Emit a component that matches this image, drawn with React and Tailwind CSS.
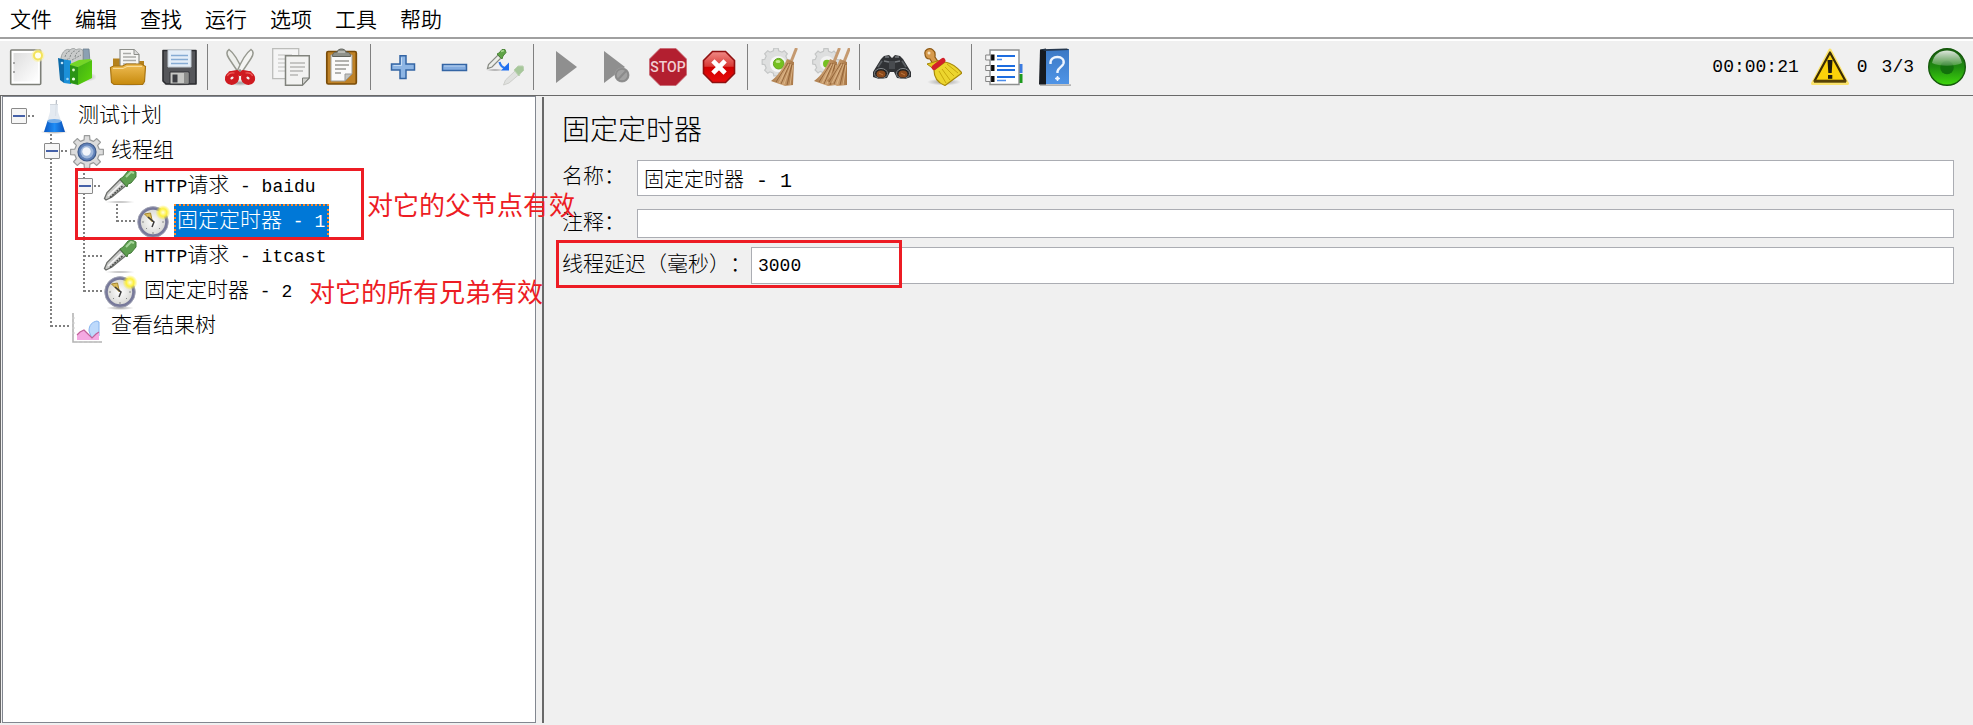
import React, { useState } from 'react';

const gearPath = (cx, cy, ro, ri, teeth) => {
  const pts = [];
  const step = (Math.PI * 2) / teeth;
  for (let i = 0; i < teeth; i++) {
    const a = i * step - Math.PI / 2;
    [[-0.3, ri], [-0.2, ro], [0.2, ro], [0.3, ri]].forEach(([k, r]) => {
      pts.push((cx + Math.cos(a + k * step) * r).toFixed(2) + ' ' + (cy + Math.sin(a + k * step) * r).toFixed(2));
    });
  }
  return 'M' + pts.join('L') + 'Z';
};

const Defs = () => (
  <svg width="0" height="0" className="absolute" aria-hidden="true">
    <defs>
      <linearGradient id="gold" x1="0" y1="0" x2="0" y2="1"><stop offset="0" stopColor="#efbd55" /><stop offset="1" stopColor="#c78a0c" /></linearGradient>
      <linearGradient id="green" x1="0" y1="0" x2="1" y2="1"><stop offset="0" stopColor="#3fae14" /><stop offset="1" stopColor="#5fd60a" /></linearGradient>
      <linearGradient id="paper" x1="0" y1="0" x2="1" y2="1"><stop offset="0" stopColor="#dedede" /><stop offset="1" stopColor="#ffffff" /></linearGradient>
      <linearGradient id="red" x1="0" y1="0" x2="0" y2="1"><stop offset="0" stopColor="#f08a86" /><stop offset="0.48" stopColor="#d93a35" /><stop offset="0.5" stopColor="#d00000" /><stop offset="1" stopColor="#e80c0c" /></linearGradient>
      <linearGradient id="book" x1="0" y1="0" x2="0" y2="1"><stop offset="0" stopColor="#3b78c4" /><stop offset="1" stopColor="#4f94e6" /></linearGradient>
      <linearGradient id="straw" x1="0" y1="0" x2="1" y2="0"><stop offset="0" stopColor="#ab7b4b" /><stop offset="0.5" stopColor="#cda273" /><stop offset="1" stopColor="#a87645" /></linearGradient>
      <linearGradient id="ball" x1="0" y1="0" x2="0" y2="1"><stop offset="0" stopColor="#1a5a12" /><stop offset="0.5" stopColor="#1f8c10" /><stop offset="1" stopColor="#3fd80c" /></linearGradient>
      <linearGradient id="shine" x1="0" y1="0" x2="0" y2="1"><stop offset="0" stopColor="#ffffff" stopOpacity="0.85" /><stop offset="1" stopColor="#ffffff" stopOpacity="0.2" /></linearGradient>
      <linearGradient id="liquid" x1="0" y1="0" x2="1" y2="0"><stop offset="0" stopColor="#0a56c0" /><stop offset="0.5" stopColor="#1e8cf5" /><stop offset="1" stopColor="#0a50b8" /></linearGradient>
      <radialGradient id="clock"><stop offset="0" stopColor="#ffffff" /><stop offset="1" stopColor="#d6d6d2" /></radialGradient>
      <radialGradient id="spark"><stop offset="0" stopColor="#fffde0" /><stop offset="0.5" stopColor="#fdf03c" /><stop offset="1" stopColor="#fdf03c" stopOpacity="0" /></radialGradient>
      <radialGradient id="shadow"><stop offset="0" stopColor="#000000" stopOpacity="0.35" /><stop offset="1" stopColor="#000000" stopOpacity="0" /></radialGradient>
    </defs>
  </svg>
);

const Icon = ({ children, size = 38 }) => (
  <svg width={size} height={size} viewBox={`0 0 ${size} ${size}`} className="shrink-0" fill="none" aria-hidden="true">{children}</svg>
);

const NewIcon = () => (
  <Icon>
    <rect x="3.7" y="2" width="30" height="34.5" rx="1" fill="#fff" stroke="#7d7f78" strokeWidth="1.6" />
    <rect x="6.5" y="5" width="24.5" height="28.5" fill="url(#paper)" />
    <path d="M6 14h2v2H6zM6 23h2v2H6z" fill="#a8a8a8" />
    <circle cx="31" cy="7.500" r="6.500" fill="#fbf2a0" opacity="0.6" />
    <circle cx="31" cy="7.500" r="4" fill="#fffef0" stroke="#f4e45a" strokeWidth="2" />
  </Icon>
);
const TemplatesIcon = () => (
  <Icon>
    <ellipse cx="26" cy="29" rx="13" ry="5" fill="url(#shadow)" />
    <path d="M25 1h6l1 14-7 4z" fill="#8ba0b2" stroke="#6d7f8e" strokeWidth="0.8" />
    <path d="M3 10C4 3 9 0 12 2c2-2 5-2 6 0 3-2 6-1 7 1v14l-13 6-9-8z" fill="#c9cbcb" stroke="#8f9494" strokeWidth="0.8" />
    <path d="M7 9c1-4 3-6 5-6M12 9c1-4 3-6 5-6M17 9c1-4 3-6 5-6M6 13l6-3M14 12l9-5" stroke="#888d8d" strokeWidth="1" strokeDasharray="2 1" />
    <path d="M0 10l6 1.500V35l-4-3z" fill="#0d6aa8" />
    <path d="M6 11.500l7 1V36L6 35z" fill="#1b90d8" />
    <path d="M12 16l9-4 11-1 2 1-13 7-9-1z" fill="#74d626" />
    <path d="M12 17l8 2v18l-8-2z" fill="#2a9414" />
    <path d="M20 19l14-7v18l-14 7z" fill="url(#green)" />
    <circle cx="4" cy="15" r="1.300" fill="#bfe4fa" /><circle cx="9.500" cy="31" r="1.300" fill="#9fd4f4" />
    <circle cx="15.500" cy="22" r="1.400" fill="#d9f7c4" /><circle cx="15.500" cy="31" r="1.600" fill="#e9ffe0" />
  </Icon>
);
const OpenIcon = () => (
  <Icon>
    <ellipse cx="20" cy="36" rx="19" ry="2" fill="url(#shadow)" />
    <path d="M4 20V10.500h9L15 13h20v9z" fill="#b4811c" />
    <path d="M11 21V1.500h14l5 5V21z" fill="#f6f6f4" stroke="#8d8f8a" strokeWidth="1.200" />
    <path d="M25 1.500v5h5" fill="#ddd" stroke="#8d8f8a" />
    <path d="M14 5.500h8M14 9h13M14 12.500h13M14 16h13" stroke="#a9aaa7" strokeWidth="1.500" />
    <path d="M1.500 19.500l3-1.500h9l4 -2h15l4 2.500-1 15-2 3H5l-2.500-2z" fill="url(#gold)" stroke="#a87410" strokeWidth="1.200" />
    <path d="M4 20.500h10l4-2h15" stroke="#f8dc98" strokeWidth="1" />
  </Icon>
);
const SaveIcon = () => (
  <Icon>
    <ellipse cx="19" cy="36.500" rx="18" ry="1.500" fill="url(#shadow)" />
    <path d="M3 2.500h33V36H6l-3-3z" fill="#55565a" stroke="#2b2c30" strokeWidth="1.600" strokeLinejoin="round" />
    <path d="M8 2h23v17H8z" fill="#e4eef8" stroke="#c3cbd3" />
    <path d="M11 7.500h17M11 11.500h17M11 15.500h17" stroke="#86acd4" strokeWidth="1.500" />
    <path d="M10 24h19v12H10z" fill="#c6c7c4" stroke="#303034" strokeWidth="1" />
    <path d="M12.500 26.500h5v8h-5z" fill="#3c3d42" />
    <path d="M24 25h4v10h-4z" fill="#8d8e8c" />
  </Icon>
);
const CutIcon = () => (
  <Icon>
    <ellipse cx="19" cy="35" rx="13" ry="3" fill="url(#shadow)" />
    <path d="M8 1.500c-3 2-2 6 0 9l10 15 4-2C18 14 13 5 8 1.500z" fill="#eeefec" stroke="#96988f" strokeWidth="1.500" />
    <path d="M30 1.500c3 2 2 6 0 9L20 25.500l-4-2C20 14 25 5 30 1.500z" fill="#f4f4f2" stroke="#96988f" strokeWidth="1.500" />
    <ellipse cx="11" cy="30" rx="4.500" ry="4" stroke="#cf1a20" strokeWidth="5.500" transform="rotate(-35 11 30)" />
    <ellipse cx="27" cy="30" rx="4.500" ry="4" stroke="#cf1a20" strokeWidth="5.500" transform="rotate(35 27 30)" />
    <path d="M8 25.500l8-1.500 3 2 3-2 8 1.500" stroke="#cf1a20" strokeWidth="4" strokeLinejoin="round" />
    <path d="M6.500 28c1-3 4-3.500 7-3M31.500 28c-1-3-4-3.500-7-3" stroke="#f0605c" strokeWidth="1.200" />
    <circle cx="19" cy="22.500" r="1.200" fill="#8a8a86" />
  </Icon>
);
const CopyIcon = () => (
  <Icon>
    <path d="M.7.700h26v30H.7z" fill="#f5f5f5" stroke="#bcbdba" strokeWidth="1.300" />
    <path d="M6 7h14M6 11h10M6 15h7M6 19h7M6 23h7" stroke="#d1d1cf" strokeWidth="1.400" />
    <path d="M13.500 7.700H37.300V30l-7 7.300H13.500z" fill="#f2f2f1" stroke="#81837d" strokeWidth="1.500" />
    <path d="M18 15h15M18 19h15M18 23h13M18 27h8" stroke="#b6b7b4" strokeWidth="1.400" />
    <path d="M37 30h-6.500v7z" fill="#cfd0cd" stroke="#7b7d77" />
  </Icon>
);
const PasteIcon = () => (
  <Icon>
    <rect x="3.800" y="3.500" width="29.500" height="32.500" rx="1.500" fill="#bf8227" stroke="#7a4c08" strokeWidth="1.700" />
    <path d="M8 7h21v19l-7 7H8z" fill="#fafafa" stroke="#a1a29e" />
    <path d="M29 26h-7v7z" fill="#c4c5c1" stroke="#999" />
    <path d="M12 13h14M12 17h14M12 21h11M12 25h6" stroke="#9a9b97" strokeWidth="1.500" />
    <path d="M9.500 8.500c0-4 2-4 4.500-4.500 1-4 8-4 9 0 3 .5 4.500 1 4.500 4.500z" fill="#8f918a" stroke="#60625c" />
    <path d="M15 4h7" stroke="#c3c4be" strokeWidth="1.500" />
  </Icon>
);
const PlusIcon = () => (
  <Icon><path d="M16 7.700h6V16h8.500v6H22v8.500h-6V22H7.500v-6H16z" fill="#8db5e4" stroke="#3465a4" strokeWidth="1.500" /><path d="M17.500 9.500v8h-8" stroke="#c5dbf3" /></Icon>
);
const MinusIcon = () => (
  <Icon><path d="M7.500 16.500h24v6h-24z" fill="#83ace0" stroke="#3465a4" strokeWidth="1.500" /><path d="M9 18h21" stroke="#b9d2ef" /></Icon>
);
const ToggleIcon = () => (
  <Icon>
    <ellipse cx="9" cy="22" rx="9" ry="1.500" fill="url(#shadow)" />
    <path d="M1.500 20.500l1-4L12 7l3 3L6 19z" fill="#eceee9" stroke="#878a83" strokeWidth="1.200" />
    <path d="M11 6l2-1 3-3.500 3 0 1 3-3 3.500-1 3z" fill="#5fa346" stroke="#4c8538" />
    <path d="M15 3.500l3-1" stroke="#a8d890" strokeWidth="1.500" />
    <path d="M13.500 14c1 4 3 6 7 6.500" stroke="#2a78f0" strokeWidth="2.200" />
    <path d="M23 14.500v8h-8z" fill="#1f6ef0" />
    <g opacity="0.55">
      <path d="M17.500 37l2-5L29 23l4 3.500L23 35z" fill="#d4d6d2" stroke="#b2b4ae" />
      <path d="M28 22l4-4 5 0 1 4-4 4-1 2z" fill="#6da657" stroke="#8fb77e" />
    </g>
  </Icon>
);
const PlayIcon = () => (<Icon><path d="M9 3l21 16L9 35z" fill="#8f8f8f" /></Icon>);
const PlayNoPauseIcon = () => (
  <Icon>
    <path d="M6 3l21 16L6 35z" fill="#8f8f8f" />
    <circle cx="24" cy="27" r="7.500" fill="#a2a2a2" /><circle cx="24" cy="27" r="6.200" stroke="#8b8b8b" strokeWidth="1.800" />
    <path d="M20 31.500l8.500-9" stroke="#8b8b8b" strokeWidth="2" />
  </Icon>
);
const StopIcon = () => (
  <Icon>
    <path d="M11 .500h16L37.500 11v16L27 37.500H11L.5 27V11z" fill="#b31f30" stroke="#c86a74" strokeWidth="0.800" />
    <text x="19" y="24" textAnchor="middle" fontFamily="Liberation Sans Narrow, Roboto, sans-serif" fontWeight="500" fontSize="14" fill="#f1cdd1">STOP</text>
  </Icon>
);
const ShutdownIcon = () => (
  <Icon>
    <path d="M12.500 3.500h13L34.500 12.500v13L25.500 34.500h-13L3.500 25.500v-13z" fill="url(#red)" stroke="#8f1010" strokeWidth="1.600" />
    <path d="M14.500 14.500l9 9M23.500 14.500l-9 9" stroke="#fff" strokeWidth="4.600" strokeLinecap="square" />
  </Icon>
);
const Straw = ({ dx = 0, narrow = false }) => (
  <g transform={`translate(${dx} 0)`}>
    <path d="M35.500 0L30 14" stroke="#c59a70" strokeWidth="3" />
    <path d={narrow ? 'M26 11l7 3 0 23-10 1-10-5C17 28 22 20 26 11z' : 'M26 11l7 3-1 23-8 1-14-5C17 28 22 20 26 11z'} fill="url(#straw)" />
    <path d="M27 15l-12 19M29 15l-9 21M31 16l-5 21" stroke="#8a5a30" strokeWidth="0.800" />
    <path d="M28 16l-10 19M30 16l-7 20M32 17l-3 20" stroke="#e2bd8e" strokeWidth="0.800" />
  </g>
);
const ClearIcon = () => (
  <Icon>
    <path d={gearPath(15, 14, 14, 11.5, 8)} fill="#dedfdf" stroke="#c4c6c6" strokeWidth="1.200" />
    <circle cx="17" cy="16" r="8" fill="#f6f6f6" />
    <circle cx="17.700" cy="15.700" r="5.300" fill="#76c021" stroke="#64a820" />
    <ellipse cx="17" cy="13.500" rx="2.500" ry="1.500" fill="#c3e98d" />
    <Straw />
  </Icon>
);
const ClearAllIcon = () => (
  <Icon>
    <path d={gearPath(14, 14, 13.5, 11, 8)} fill="#dedfdf" stroke="#c4c6c6" strokeWidth="1.200" />
    <circle cx="15" cy="15" r="7" fill="#f2f2f2" />
    <circle cx="15" cy="15.700" r="4" fill="#76c021" />
    <Straw dx={-8} /><Straw dx={2} narrow />
  </Icon>
);
const SearchIcon = () => (
  <Icon>
    <path d="M0 24L8 11l3-3 5-1 3 3 3-3 5 1 3 3 8 13v5l-6 2-8-1-3-6h-4l-3 6-8 1-6-2z" fill="#303235" />
    <path d="M12 9h4M22 9h4M11 13l5 1M22 14l5-1" stroke="#777b7f" strokeWidth="1.600" />
    <path d="M5 19l4-6M33 19l-4-6" stroke="#5c6064" strokeWidth="1.600" />
    <rect x="16" y="13" width="6" height="8" fill="#484b4f" />
    <ellipse cx="8" cy="25.500" rx="6.500" ry="5" fill="#222" stroke="#85898c" /><ellipse cx="8" cy="26" rx="4.500" ry="3.500" fill="#8c4a1c" />
    <ellipse cx="30" cy="25.500" rx="6.500" ry="5" fill="#222" stroke="#85898c" /><ellipse cx="30" cy="26" rx="4.500" ry="3.500" fill="#8c4a1c" />
    <path d="M6 25l4 2M28 25l4 2" stroke="#c17b40" />
  </Icon>
);
const ResetSearchIcon = () => (
  <Icon>
    <ellipse cx="20" cy="34" rx="17" ry="3.500" fill="url(#shadow)" />
    <path d="M1 6C0 2 5-1 9 2c3 2 2 5 2 7l4 6-5 3-4-7C3 11 1 9 1 6z" fill="#d69a4c" stroke="#8f5a14" strokeWidth="1.200" />
    <circle cx="5" cy="5" r="1.500" fill="#f6e2c0" />
    <path d="M3 16l14-4 4 2-10 8z" fill="#e6c91e" stroke="#a88a08" />
    <path d="M10 22l11-8c6 1 12 5 17 11L21 37.500C14 35 10 29 10 22z" fill="#ecd52e" stroke="#a8890a" strokeWidth="1.200" />
    <path d="M15 23l7 12M18 21l8 11M21 19l9 9M23 16l11 9" stroke="#c9a90e" strokeWidth="1" />
    <path d="M10 19.500l9-7" stroke="#d3202a" strokeWidth="5" strokeLinecap="round" />
  </Icon>
);
const FunctionIcon = () => (
  <Icon>
    <rect x="32" y="16" width="5.500" height="9" fill="#3b7be0" /><rect x="32" y="26" width="5.500" height="9" fill="#1d9a1d" />
    <path d="M5 2h29v34.500H5z" fill="#fff" stroke="#8e9090" strokeWidth="1.400" />
    <path d="M6 6.500h3.500v6H6zM6 17h3.500v6H6zM6 28h3.500v6H6z" fill="#0b0b0b" />
    <path d="M0.700 7h5v5h-5zM0.700 17.500h5v5h-5zM0.700 28.500h5v5h-5z" fill="#f3f3f3" stroke="#858585" />
    <path d="M12 8h18M12 18h18M12 22h18M12 29h18" stroke="#1e6de0" strokeWidth="1.800" />
    <path d="M12 11.500h5M12 32.500h9" stroke="#4a8cec" strokeWidth="1.600" />
  </Icon>
);
const HelpIcon = () => (
  <Icon>
    <path d="M4 36.500h31v1.200H4z" fill="#999" />
    <path d="M4 1.500L10 .500v36H3z" fill="#161a20" />
    <path d="M10 2l23-1v35H10z" fill="url(#book)" />
    <path d="M5 1.300L31 .500l2 1.500-24 1z" fill="#26384e" />
    <path d="M14.500 16c-.5-5 3-7 7-7s7 2.500 6 6.500c-1 3.500-5.500 4-6 8v1.500" stroke="#eef5ff" strokeWidth="2.400" />
    <path d="M21.500 28l.8 1.700 1.700.8-1.700.8-.8 1.700-.8-1.700-1.700-.8 1.700-.8z" fill="#eef5ff" stroke="#eef5ff" />
  </Icon>
);
const WarningIcon = () => (
  <Icon>
    <path d="M19 2L36.500 35.500h-35z" fill="#fbd20a" stroke="#fbe36c" strokeWidth="3" strokeLinejoin="round" />
    <path d="M19 4.500L34.500 33h-31z" fill="#fbd20a" stroke="#3a2c05" strokeWidth="2.200" strokeLinejoin="round" />
    <path d="M3 33.200h32" stroke="#574206" strokeWidth="3" />
    <path d="M16.500 12h5l-.8 13h-3.400z" fill="#1d1a10" /><rect x="17" y="27" width="4.300" height="3.800" fill="#1d1a10" />
  </Icon>
);
const RunningIcon = () => (
  <Icon>
    <circle cx="19" cy="19" r="18.300" fill="url(#ball)" stroke="#155a0c" strokeWidth="1.400" />
    <circle cx="19" cy="19.500" r="6.800" fill="#12700c" />
    <path d="M4 15C6 6 12 2.500 19 2.500S32 6 34 15c-7 3.500-23 3.500-30 0z" fill="url(#shine)" />
  </Icon>
);

/* tree icons */
const FlaskIcon = () => (
  <Icon size={36}>
    <ellipse cx="18" cy="33" rx="14" ry="2" fill="url(#shadow)" />
    <path d="M20.500 1l-1 16" stroke="#b8bec6" strokeWidth="1.300" />
    <path d="M14 5h8v8l7 20H8l6-20z" fill="#dfe6ee" fillOpacity="0.85" />
    <path d="M11.500 22h14L29 33H8z" fill="url(#liquid)" />
    <ellipse cx="18.300" cy="22" rx="7" ry="2" fill="#77aee8" />
    <path d="M14 5.500h8" stroke="#cfd5dc" />
  </Icon>
);
const GearIcon = () => (
  <Icon size={36}>
    <path d={gearPath(18, 18, 16.6, 12.5, 8)} fill="#dcdcdc" stroke="#9a9c9c" strokeWidth="1.200" strokeLinejoin="round" />
    <circle cx="18" cy="18" r="9" fill="#5f80b8" stroke="#3c5888" strokeWidth="1.200" />
    <circle cx="18" cy="18" r="6.500" fill="#9fb7da" />
    <circle cx="17.500" cy="17.500" r="4.200" fill="#f3f6fb" />
  </Icon>
);
const DropperIcon = () => (
  <Icon size={36}>
    <ellipse cx="18" cy="33" rx="16" ry="1.200" fill="url(#shadow)" />
    <path d="M2.500 29.500L5 23.500 18 10.500l6 6L10 28l-6 3z" fill="#c9cac8" stroke="#6b6d6a" strokeWidth="1.300" />
    <path d="M6 27l14-13" stroke="#f5f5f5" strokeWidth="1.600" />
    <path d="M8 28.500l13-12" stroke="#4a4c4a" strokeWidth="1.500" strokeDasharray="2 1" />
    <path d="M18 10l3-2 5-6 4-1 4 2 0 5-5 6-3 1-1 3z" fill="#5f9f51" stroke="#457c3a" />
    <path d="M24 8l5-5 3 1" stroke="#a8d69c" strokeWidth="2" />
  </Icon>
);
const ClockIcon = () => (
  <Icon size={36}>
    <ellipse cx="18" cy="34" rx="14" ry="2" fill="url(#shadow)" />
    <circle cx="18" cy="18" r="13.800" fill="url(#clock)" stroke="#77799a" strokeWidth="3.200" />
    <circle cx="18" cy="18" r="15.300" stroke="#a6a8b6" strokeWidth="0.800" />
    <path d="M17.500 18L9.500 10l6-1z" fill="#dcbc58" stroke="#a58730" />
    <path d="M13 13l6 5-2 5" stroke="#3c3c3c" strokeWidth="1.500" />
    <path d="M18 28v2M7 18h2M27 18h2M11 25l1-1M25 25l-1-1" stroke="#88898a" />
    <circle cx="28" cy="8.500" r="7.500" fill="url(#spark)" />
  </Icon>
);
const ResultsIcon = () => (
  <Icon size={36}>
    <path d="M4 4v29h29" stroke="#b4b4b4" strokeWidth="1.600" />
    <path d="M3 9h3M3 14h3M3 19h3M3 24h3M9 34v-2M14 34v-2M19 34v-2M24 34v-2M29 34v-2" stroke="#cfcfcf" />
    <path d="M20 22c0-6 3-9 8-10l2 1v14l-7 3z" fill="#bdd9fb" stroke="#86b4ef" />
    <path d="M8 31v-5l3-3 4-2 3 3 5 5 4-4 3-2v8z" fill="#f4a9e2" />
    <path d="M8 26l3-3 4-2 3 3 5 5 4-4 3-2" stroke="#c0629a" strokeWidth="1.200" />
  </Icon>
);

const groups = [
  [['新建', NewIcon], ['模板', TemplatesIcon], ['打开', OpenIcon], ['保存', SaveIcon]],
  [['剪切', CutIcon], ['复制', CopyIcon], ['粘贴', PasteIcon]],
  [['展开', PlusIcon], ['收起', MinusIcon], ['切换', ToggleIcon]],
  [['启动', PlayIcon], ['不停顿启动', PlayNoPauseIcon], ['停止', StopIcon], ['关闭', ShutdownIcon]],
  [['清除', ClearIcon], ['清除全部', ClearAllIcon]],
  [['搜索', SearchIcon], ['重置搜索', ResetSearchIcon]],
  [['函数助手', FunctionIcon], ['帮助', HelpIcon]],
];

const lines = {
  blank: '',
  root: 'M25 17H33',
  v: 'M15 0V35',
  open: 'M15 0V35M25 17H33',
  tee: 'M15 0V35M15 17H33',
  elbow: 'M15 0V18M15 17H33',
};

const Guide = ({ kind }) => (
  <span className="relative flex h-[35px] w-[33px] shrink-0">
    <svg width="33" height="35" aria-hidden="true"><path d={lines[kind]} stroke="#808080" strokeWidth="2" strokeDasharray="2 2" fill="none" /></svg>
    {(kind === 'root' || kind === 'open') && (
      <button type="button" aria-label="折叠" className="absolute left-2 top-[9px] flex size-4 items-center justify-center rounded-[1px] border border-[#8a8a8a] bg-[#f6f6f6]">
        <span className="h-0.5 w-3 bg-[#4561a8]" />
      </button>
    )}
  </span>
);

const Latin = ({ children }) => <span className="whitespace-pre text-[18px]">{children}</span>;

const rows = [
  { guides: ['root'], icon: FlaskIcon, cjk: '测试计划' },
  { guides: ['blank', 'open'], icon: GearIcon, cjk: '线程组' },
  { guides: ['blank', 'v', 'open'], icon: DropperIcon, pre: 'HTTP', cjk: '请求', post: ' - baidu' },
  { guides: ['blank', 'v', 'v', 'elbow'], icon: ClockIcon, cjk: '固定定时器', post: ' - 1' },
  { guides: ['blank', 'v', 'tee'], icon: DropperIcon, pre: 'HTTP', cjk: '请求', post: ' - itcast' },
  { guides: ['blank', 'v', 'elbow'], icon: ClockIcon, cjk: '固定定时器', post: ' - 2' },
  { guides: ['blank', 'elbow'], icon: ResultsIcon, cjk: '查看结果树' },
];

const fieldClass = 'min-w-0 flex-1 border border-[#abadb3] bg-white px-1.5 outline-none';

export default function App() {
  const [selected, setSelected] = useState(3);
  return (
    <div className="flex min-h-screen flex-col overflow-hidden bg-[#f0f0f0] font-['Liberation_Mono','Noto_Sans_CJK_SC',monospace] text-[21px] font-light leading-[30px] text-black [text-spacing-trim:space-all]">
      <Defs />
      <nav className="flex h-[39px] items-center gap-[23px] border-b-2 border-[#a0a0a0] bg-white px-2.5 pb-0.5 font-['Noto_Sans_CJK_SC',sans-serif] font-[350]">
        {['文件', '编辑', '查找', '运行', '选项', '工具', '帮助'].map((m) => (
          <button key={m} type="button" className="shrink-0">{m}</button>
        ))}
      </nav>
      <div className="flex h-[57px] items-center border-b border-t-2 border-b-[#696969] border-t-white pb-0.5">
        {groups.map((g, i) => (
          <div key={i} className="flex shrink-0 items-center">
            {i > 0 && <span className="ml-[3px] mr-1.5 h-[46px] w-px bg-[#808080]" />}
            {g.map(([label, Glyph]) => (
              <button key={label} type="button" aria-label={label} title={label} className="flex h-[50px] w-[51px] items-center justify-center"><Glyph /></button>
            ))}
          </div>
        ))}
        <div className="ml-auto flex shrink-0 items-center pr-[7px] text-[18px]">
          <span className="mr-3">00:00:21</span>
          <WarningIcon />
          <span className="ml-2 mr-3.5">0</span>
          <span className="mr-3.5">3/3</span>
          <RunningIcon />
        </div>
      </div>

      <main className="flex grow pb-0.5">
        <section className="relative flex w-[536px] shrink-0 border-l border-[#696969] pl-px">
          <div className="grow border border-[#828790] bg-white">
            <ul className="pt-0.5">
              {rows.map((r, i) => {
                const Glyph = r.icon;
                const on = selected === i;
                return (
                  <li key={i} className="flex h-[35px] items-center">
                    {r.guides.map((k, j) => <Guide key={j} kind={k} />)}
                    <Glyph />
                    <button
                      type="button"
                      onClick={() => setSelected(i)}
                      className={on
                        ? 'ml-[3px] flex h-[35px] items-center whitespace-nowrap border-2 border-dotted border-[#ff8728] bg-[#0078d7] pl-px pr-0.5 text-white'
                        : 'ml-[3px] flex h-[35px] items-center whitespace-nowrap pl-[3px]'}
                    >
                      <span>{r.pre && <Latin>{r.pre}</Latin>}{r.cjk}{r.post && <Latin>{r.post}</Latin>}</span>
                    </button>
                  </li>
                );
              })}
            </ul>
          </div>
          <div className="pointer-events-none absolute left-[74px] top-[72px] z-10 h-[72px] w-[289px] border-3 border-[#ed1c24]" />
          <p className="pointer-events-none absolute left-[366px] top-[89px] z-10 whitespace-nowrap font-['Noto_Sans_CJK_SC',sans-serif] text-[26px] font-normal leading-[38px] text-[#ed1c24]">对它的父节点有效</p>
          <p className="pointer-events-none absolute left-[308px] top-[176px] z-10 whitespace-nowrap font-['Noto_Sans_CJK_SC',sans-serif] text-[26px] font-normal leading-[38px] text-[#ed1c24]">对它的所有兄弟有效</p>
        </section>

        <section className="ml-1.5 mr-0.5 mt-px min-w-0 grow border-l-2 border-[#696969] pl-[18px] pr-[17px] pt-4">
          <h1 className="text-[28px] leading-10">固定定时器</h1>
          <form className="mt-[7px]" onSubmit={(e) => e.preventDefault()}>
            <div className="flex h-9 items-center">
              <label htmlFor="name" className="w-[75px] shrink-0">名称：</label>
              <input id="name" defaultValue="固定定时器 - 1" className={`${fieldClass} h-9 text-[20px]`} />
            </div>
            <div className="mt-[13px] flex h-[29px] items-center">
              <label htmlFor="comment" className="w-[75px] shrink-0">注释：</label>
              <input id="comment" defaultValue="" className={`${fieldClass} h-[29px] text-[20px]`} />
            </div>
            <div className="relative mt-[9px] flex h-[37px] items-center">
              <label htmlFor="delay" className="w-[189px] shrink-0 whitespace-nowrap">线程延迟（毫秒）：</label>
              <input id="delay" defaultValue="3000" className={`${fieldClass} h-[37px] px-1 text-[18px]`} />
              <div className="pointer-events-none absolute -left-1.5 -top-[7px] h-[48px] w-[346px] border-3 border-[#ed1c24]" />
            </div>
          </form>
        </section>
      </main>
    </div>
  );
}
